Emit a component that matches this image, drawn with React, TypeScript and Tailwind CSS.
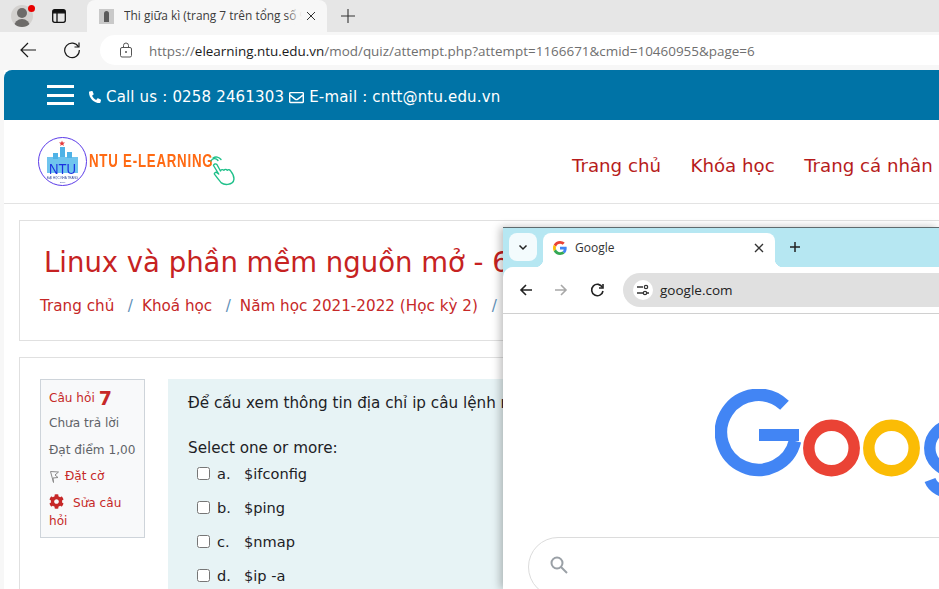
import { FaPhone, FaRegEnvelope, FaCog } from "react-icons/fa";

const dv = "font-['DejaVu_Sans','Liberation_Sans',sans-serif]";
const ui = "font-['Open_Sans','Noto_Sans',sans-serif]";

function Logo() {
  return (
    <svg width="200" height="60" viewBox="38 130 200 60" className="mb-[3px] shrink-0 blur-[0.3px]">
      <circle cx="62.5" cy="161.500" r="24" fill="#fff" stroke="#5b3be8" strokeWidth="1" />
      <path d="M62 140.500l.8 2 2.200.1-1.700 1.300.6 2.100-1.900-1.200-1.800 1.200.5-2.100-1.700-1.300 2.200-.1z" fill="#e5393b" />
      <rect x="47" y="157" width="31" height="16" fill="#6fc4ee" />
      <rect x="53" y="153" width="5" height="6" fill="#4fb2e6" />
      <rect x="60" y="147" width="5" height="10" fill="#4fb2e6" />
      <rect x="67" y="152" width="5" height="6" fill="#4fb2e6" />
      <text x="62.500" y="174" textAnchor="middle" fontFamily="Liberation Sans" fontSize="15" fill="#1b2fe0" textLength="27" lengthAdjust="spacingAndGlyphs">NTU</text>
      <text x="62.500" y="179" textAnchor="middle" fontFamily="Liberation Sans" fontSize="3" fill="#2a3f9a">ĐẠI HỌC NHA TRANG</text>
      <text x="62.500" y="183" textAnchor="middle" fontFamily="Liberation Sans" fontSize="2.500" fill="#2a3f9a">1959</text>
      <g transform="translate(89 0) scale(0.7 1)">
        <text x="0" y="167" fontFamily="Liberation Sans" fontWeight="700" fontSize="19" letterSpacing="1.100" fill="#ff6a13">NTU E-LEARNING</text>
      </g>
      <g fill="none" stroke="#1fc08a" strokeWidth="1.400" strokeLinecap="round" strokeLinejoin="round">
        <path d="M213 158a6 6 0 0 1 8 1.500M211 161a4 4 0 0 1 7-.5" />
        <path d="M213.500 165.500a2 2 0 0 1 3.400-1l3.600 6.500a2 2 0 0 1 3.400-.7 2 2 0 0 1 3.400 0 2 2 0 0 1 3.300.6c2 2.500 3.500 6.500 3.300 8.500-.3 2.800-3 4.600-6 5-2.500.3-5-.3-6.500-1.500-2-2-4.500-5.500-6.800-8.500-.8-1.200 1-2.600 2.300-1.800l1.800 1.400z" />
      </g>
    </svg>
  );
}

function TabStrip() {
  return (
    <div className={`flex h-8 shrink-0 items-center bg-[#e6e6e6] ${ui}`}>
      <div className="relative ml-[11px] h-[22px] w-[22px] shrink-0 overflow-hidden rounded-full bg-[#d3d1cf]">
        <div className="mx-auto mt-[3px] h-[10px] w-[10px] rounded-full bg-[#6d6b69]" />
        <div className="mx-auto mt-px h-[8px] w-[16px] rounded-t-full bg-[#6d6b69]" />
      </div>
      <svg width="16" height="16" viewBox="0 0 16 16" className="ml-[18px] shrink-0">
        <rect x="1.700" y="1.700" width="12.600" height="12.600" rx="2" fill="none" stroke="#111" strokeWidth="1.300" />
        <path d="M2 4.800h12M6 5v9" stroke="#111" strokeWidth="1.300" />
        <rect x="2" y="2" width="12" height="2.800" fill="#111" />
      </svg>
      <div className="ml-[20px] flex h-8 w-[240px] shrink-0 items-center rounded-t-lg bg-[#f7f7f7]">
        <div className="ml-3 flex h-[15px] w-[15px] shrink-0 items-center justify-center bg-[#c9c9c9]">
          <div className="h-[11px] w-[5px] rounded-t-sm bg-[#5a5a5a]" />
        </div>
        <div className="relative ml-[10px] w-[178px] overflow-hidden whitespace-nowrap text-[11.900px] text-[#3c3c3c]">
          Thi giữa kì (trang 7 trên tổng số 9)
          <div className="absolute inset-y-0 right-0 w-4 bg-gradient-to-r from-transparent to-[#f7f7f7]" />
        </div>
        <svg width="10" height="10" viewBox="0 0 10 10" className="ml-[4px] shrink-0">
          <path d="M1 1l8 8M9 1l-8 8" stroke="#333" strokeWidth="1" />
        </svg>
      </div>
      <svg width="16" height="16" viewBox="0 0 16 16" className="ml-[13px] shrink-0">
        <path d="M8 1v14M1 8h14" stroke="#333" strokeWidth="1.100" />
      </svg>
    </div>
  );
}

function BrowserBar() {
  return (
    <div className={`flex h-[38px] shrink-0 items-center bg-[#f7f7f7] pb-[2px] ${ui}`}>
      <svg width="18" height="18" viewBox="0 0 18 18" className="ml-[19px] shrink-0">
        <path d="M17 9H2M9 2L2 9l7 7" fill="none" stroke="#1a1a1a" strokeWidth="1.200" />
      </svg>
      <svg width="18" height="18" viewBox="0 0 18 18" className="ml-[26px] shrink-0">
        <path d="M15.500 6A7.300 7.300 0 1 0 16.300 9" fill="none" stroke="#1a1a1a" strokeWidth="1.200" />
        <path d="M16 1.500V6h-4.500" fill="none" stroke="#1a1a1a" strokeWidth="1.200" />
      </svg>
      <div className="ml-[19px] flex h-[30px] flex-1 items-center rounded-l-full bg-white">
        <svg width="14" height="16" viewBox="0 0 14 16" className="ml-[19px] shrink-0">
          <rect x="1.500" y="5.500" width="11" height="9.500" rx="1.500" fill="none" stroke="#555" />
          <path d="M4.500 5.500V3.500a2.500 2.500 0 0 1 5 0v2" fill="none" stroke="#555" />
          <circle cx="7" cy="10" r="1" fill="#555" />
        </svg>
        <div className="ml-[16px] whitespace-nowrap pt-[2px] text-[13.450px] text-[#6f6f6f]">
          https://<span className="text-[#1a1a1a]">elearning.ntu.edu.vn</span>/mod/quiz/attempt.php?attempt=1166671&amp;cmid=10460955&amp;page=6
        </div>
      </div>
    </div>
  );
}

function SiteHeader() {
  return (
    <div className={`flex h-[50px] shrink-0 items-center rounded-tl-lg bg-[#0073a6] pl-[43px] text-[15px] tracking-[0.17px] text-white ${dv}`}>
      <div className="flex w-[27px] shrink-0 flex-col gap-[5.500px]">
        <div className="h-[3px] bg-white" />
        <div className="h-[3px] bg-white" />
        <div className="h-[3px] bg-white" />
      </div>
      <div className="flex items-center pt-[4px]">
        <FaPhone className="ml-[15px] h-3 w-3 shrink-0 -scale-x-100" />
        <span className="ml-[5px] whitespace-nowrap">Call us : 0258 2461303</span>
        <FaRegEnvelope className="ml-[5px] h-[15px] w-[15px] shrink-0" />
        <span className="ml-[5px] whitespace-nowrap">E-mail : cntt@ntu.edu.vn</span>
      </div>
    </div>
  );
}

function SiteNav() {
  return (
    <div className={`flex h-[84px] shrink-0 items-center border-b border-[#e3e3e3] pl-[34px] text-[18.200px] text-[#b71c1c] ${dv}`}>
      <Logo />
      <div className="ml-[334px] flex shrink-0 gap-[29.500px] whitespace-nowrap pt-[9px]">
        <span>Trang chủ</span>
        <span>Khóa học</span>
        <span>Trang cá nhân</span>
      </div>
    </div>
  );
}

function TitleCard() {
  return (
    <div className={`ml-[15px] mt-4 h-[121px] w-[1000px] shrink-0 border border-[#e0e0e0] ${dv}`}>
      <div className="ml-[24px] mt-[21px] whitespace-nowrap text-[27.500px] leading-[40px] text-[#c62222]">
        Linux và phần mềm nguồn mở - 64.CNTT
      </div>
      <div className="ml-[20px] mt-[14px] flex items-center whitespace-nowrap text-[15.200px] leading-[20px] text-[#c62828]">
        <span>Trang chủ</span>
        <span className="ml-[13.500px] mr-[9px] text-[#5f8fb8]">/</span>
        <span>Khoá học</span>
        <span className="ml-[13.500px] mr-[9px] text-[#5f8fb8]">/</span>
        <span>Năm học 2021-2022 (Học kỳ 2)</span>
        <span className="ml-[14px] text-[#5f8fb8]">/</span>
      </div>
    </div>
  );
}

function InfoBox() {
  return (
    <div className="h-[159px] w-[105px] shrink-0 border border-[#ced4da] bg-[#f8f9fa] pl-2 pr-1 text-[12.100px] text-[#5f6368]">
      <div className="mt-[7px] flex h-[22px] items-center text-[#c62828]">
        <span>Câu hỏi</span>
        <span className="ml-[4px] text-[19px] font-bold">7</span>
      </div>
      <div className="mt-[5px] leading-[18px]">Chưa trả lời</div>
      <div className="mt-[8.500px] leading-[18px]">Đạt điểm 1,00</div>
      <div className="mt-[8.500px] flex items-center leading-[18px]">
        <svg width="11" height="13" viewBox="0 0 11 13" className="shrink-0">
          <path d="M1.500 1.500L9.500 2 6 5l3 2.500-5 .5.500 4.500z" fill="none" stroke="#8a8a8a" />
        </svg>
        <span className="ml-[5px] text-[#c62828]">Đặt cờ</span>
      </div>
      <div className="mt-[9px] leading-[18px] text-[#c62828]">
        <FaCog className="mr-[9px] inline h-[15px] w-[15px] align-[-2px]" />
        Sửa câu hỏi
      </div>
    </div>
  );
}

function Option({ letter, text }: { letter: string; text: string }) {
  return (
    <div className="flex h-[34px] items-center pl-[9px]">
      <input type="checkbox" readOnly className="h-[13px] w-[13px] shrink-0" />
      <span className="ml-[7px] w-[27px] shrink-0 pt-[2px]">{letter}</span>
      <span className="pt-[2px]">{text}</span>
    </div>
  );
}

function QuestionCard() {
  return (
    <div className={`ml-[15px] mt-4 flex w-[1000px] flex-1 gap-[23px] border border-b-0 border-[#e0e0e0] pl-5 pt-[21px] ${dv}`}>
      <InfoBox />
      <div className="w-[700px] bg-[#e7f3f5] pl-[20px] pt-[13px] text-[14.600px] text-[#1d2125]">
        <div className="whitespace-nowrap text-[15.200px] leading-[22px]">Để cấu xem thông tin địa chỉ ip câu lệnh nào?</div>
        <div className="mt-[23px] text-[15.200px] leading-[22px]">Select one or more:</div>
        <div className="mt-[-3px]">
          <Option letter="a." text="$ifconfig" />
          <Option letter="b." text="$ping" />
          <Option letter="c." text="$nmap" />
          <Option letter="d." text="$ip -a" />
        </div>
      </div>
    </div>
  );
}

function GoogleMark() {
  return (
    <svg width="14" height="14" viewBox="0 0 48 48" className="shrink-0">
      <path fill="#EA4335" d="M24 9.500c3.500 0 6.700 1.200 9.200 3.600l6.900-6.900C35.900 2.400 30.500 0 24 0 14.600 0 6.500 5.400 2.600 13.200l8 6.200C12.400 13.700 17.700 9.500 24 9.500z" />
      <path fill="#4285F4" d="M46.900 24.500c0-1.600-.1-3.100-.4-4.500H24v9h12.900c-.6 3-2.300 5.500-4.800 7.200l7.700 6c4.500-4.200 7.100-10.300 7.100-17.700z" />
      <path fill="#FBBC05" d="M10.500 28.600c-.5-1.400-.8-3-.8-4.600s.3-3.200.8-4.600l-8-6.200C.9 16.500 0 20.100 0 24s.9 7.500 2.600 10.800l7.900-6.200z" />
      <path fill="#34A853" d="M24 48c6.500 0 11.900-2.100 15.900-5.800l-7.700-6c-2.200 1.400-4.900 2.300-8.200 2.300-6.300 0-11.600-4.200-13.500-9.900l-8 6.200C6.500 42.600 14.600 48 24 48z" />
    </svg>
  );
}

function ChromeWindow() {
  return (
    <div className={`absolute left-[503px] top-[227px] flex h-[362px] w-[436px] flex-col overflow-hidden border-t border-[#5f6b6e] bg-[#b6e7f2] shadow-[-3px_0_8px_rgba(0,0,0,0.25)] ${ui}`}>
      <div className="flex h-[39px] shrink-0 items-start pl-[6px] pt-[5px]">
        <div className="flex h-[28px] w-[28px] shrink-0 items-center justify-center rounded-lg bg-[#f3fbfd]">
          <svg width="10" height="10" viewBox="0 0 10 10"><path d="M1.500 3.500L5 7l3.500-3.500" fill="none" stroke="#222" strokeWidth="1.500" /></svg>
        </div>
        <div className="relative ml-[6px] flex h-[34px] w-[232px] shrink-0 items-center rounded-t-lg bg-white pb-[4px] pl-[10px]">
          <div className="absolute bottom-0 left-[-8px] h-2 w-2 bg-[radial-gradient(circle_at_0_0,#b6e7f2_8px,#fff_8.500px)]" />
          <div className="absolute bottom-0 right-[-8px] h-2 w-2 bg-[radial-gradient(circle_at_100%_0,#b6e7f2_8px,#fff_8.500px)]" />
          <GoogleMark />
          <span className="ml-[8px] text-[12px] text-[#333]">Google</span>
          <svg width="10" height="10" viewBox="0 0 10 10" className="ml-[140px] shrink-0">
            <path d="M1 1l8 8M9 1l-8 8" stroke="#333" strokeWidth="1.400" />
          </svg>
        </div>
        <svg width="12" height="12" viewBox="0 0 12 12" className="ml-[14px] mt-[8px] shrink-0">
          <path d="M6 1v10M1 6h10" stroke="#222" strokeWidth="1.500" />
        </svg>
      </div>
      <div className="flex h-[47px] shrink-0 items-center rounded-tl-[10px] border-b border-[#d0d0d0] bg-white">
        <svg width="14" height="14" viewBox="0 0 14 14" className="ml-[16px] shrink-0">
          <path d="M13 7H2M7 2L2 7l5 5" fill="none" stroke="#222" strokeWidth="1.600" />
        </svg>
        <svg width="14" height="14" viewBox="0 0 14 14" className="ml-[21px] shrink-0">
          <path d="M1 7h11M7 2l5 5-5 5" fill="none" stroke="#a8a8a8" strokeWidth="1.600" />
        </svg>
        <svg width="15" height="15" viewBox="0 0 15 15" className="ml-[22px] shrink-0">
          <path d="M12.500 4.500A5.700 5.700 0 1 0 13 8" fill="none" stroke="#222" strokeWidth="1.600" />
          <path d="M13 1v4H9" fill="none" stroke="#222" strokeWidth="1.600" />
        </svg>
        <div className="ml-[18px] flex h-[34px] flex-1 items-center rounded-l-full bg-[#e0e0e0] pl-[10px]">
          <div className="flex h-[20px] w-[20px] shrink-0 items-center justify-center rounded-full bg-white">
            <svg width="14" height="12" viewBox="0 0 14 12">
              <path d="M1 3h6M1 9h6M11 9h2" stroke="#333" strokeWidth="1.300" />
              <circle cx="10" cy="3" r="1.700" fill="none" stroke="#333" strokeWidth="1.200" />
              <circle cx="9" cy="9" r="1.700" fill="none" stroke="#333" strokeWidth="1.200" />
            </svg>
          </div>
          <span className="ml-[7px] text-[13.500px] text-[#222]">google.com</span>
        </div>
      </div>
      <div className="relative flex-1 overflow-hidden bg-white">
        <svg width="224" height="112" viewBox="0 0 224 112" className="ml-[212px] mt-[75px] block">
          <path d="M80 52A37.500 37.500 0 1 1 69.500 16.300" fill="none" stroke="#4285f4" strokeWidth="12.500" />
          <rect x="44" y="40" width="40" height="12" fill="#4285f4" />
          <circle cx="116.500" cy="59" r="22.700" fill="none" stroke="#ea4335" strokeWidth="11.500" />
          <circle cx="176.500" cy="59" r="22.700" fill="none" stroke="#fbbc05" strokeWidth="11.500" />
          <circle cx="237.500" cy="59" r="22.700" fill="none" stroke="#4285f4" strokeWidth="11.500" />
          <path d="M215 91c6 16 38 20 46-8" fill="none" stroke="#4285f4" strokeWidth="11.500" />
        </svg>
        <div className="ml-[25px] mt-[36px] flex h-[60px] w-[500px] items-start rounded-[30px] border border-[#dcdcdc] bg-white pl-[20px] pt-[17px]">
          <svg width="20" height="20" viewBox="0 0 20 20">
            <circle cx="8" cy="8" r="5.500" fill="none" stroke="#9aa0a6" strokeWidth="2" />
            <path d="M12 12l6 6" stroke="#9aa0a6" strokeWidth="2" />
          </svg>
        </div>
      </div>
    </div>
  );
}

export default function App() {
  return (
    <div className="relative flex h-[589px] w-[939px] flex-col overflow-hidden bg-white">
      <TabStrip />
      <BrowserBar />
      <div className="flex min-h-0 flex-1 flex-col overflow-hidden bg-[#f7f7f7] pl-1">
        <div className="flex min-h-0 flex-1 flex-col overflow-hidden bg-white">
          <SiteHeader />
          <SiteNav />
          <TitleCard />
          <QuestionCard />
        </div>
      </div>
      <div className="absolute left-[28px] top-[5px] h-[7px] w-[7px] rounded-full bg-[#e80000]" />
      <ChromeWindow />
    </div>
  );
}
